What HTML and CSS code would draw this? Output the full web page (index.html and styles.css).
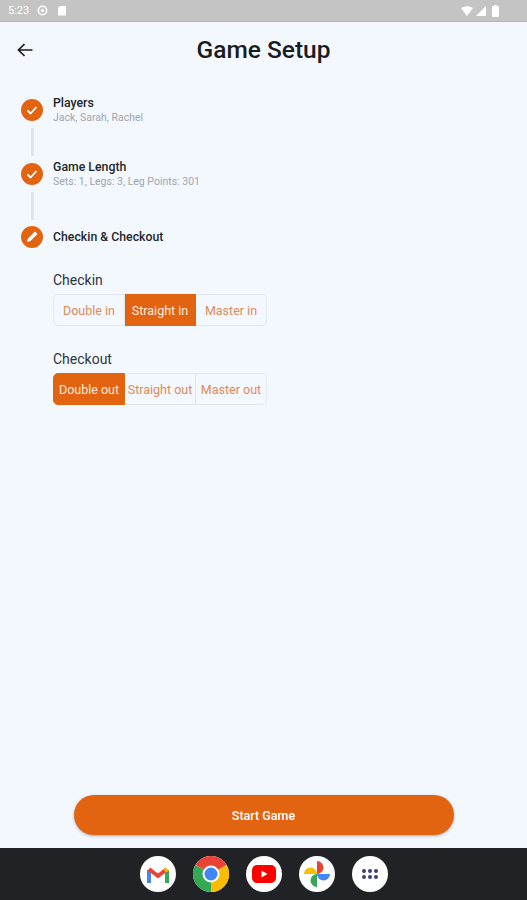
FILE: index.html
```html
<!DOCTYPE html>
<html lang="en">
  <head>
    <meta charset="UTF-8" />
    <meta name="viewport" content="width=device-width, initial-scale=1.0" />
    <title>Game Setup</title>
    <link rel="stylesheet" href="styles.css">
  </head>
  <body>
    <div class="status-bar">
      <div class="status-left">
        <span class="clock">5:23</span>
        <svg class="status-icon" width="11" height="11" viewBox="0 0 11 11"><circle cx="5.5" cy="5.5" r="4.2" fill="none" stroke="#fff" stroke-width="1.6"/><circle cx="5.5" cy="5.5" r="1.6" fill="#fff"/></svg>
        <svg class="status-icon sd" width="10" height="11" viewBox="0 0 10 11"><path d="M3 1h6v9.500H1V3z" fill="#fff"/></svg>
      </div>
      <div class="status-right">
        <svg width="12" height="10" viewBox="0 0 12 10"><path d="M0 2Q6 -1.500 12 2L6 10z" fill="#fff"/></svg>
        <svg width="10" height="10" viewBox="0 0 10 10"><path d="M10 0v10H0z" fill="#fff"/></svg>
        <svg class="battery" width="7" height="12" viewBox="0 0 7 12"><path d="M2 0h3v1h1a1 1 0 0 1 1 1v9a1 1 0 0 1-1 1H1a1 1 0 0 1-1-1V2a1 1 0 0 1 1-1h1z" fill="#fff"/></svg>
      </div>
    </div>

    <div class="page">
      <div class="header">
        <svg class="back" width="16" height="14" viewBox="0 0 16 14"><path d="M15.500 7H1.500M7.500 1L1.500 7l6 6" fill="none" stroke="#1a1c1e" stroke-width="1.700"/></svg>
        <div class="page-title">Game Setup</div>
      </div>

      <div class="stepper">
        <div class="step">
          <div class="step-side">
            <div class="step-dot">
              <svg width="14" height="14" viewBox="0 0 14 14"><path d="M2.500 7.500l3 3 6-6.500" fill="none" stroke="#fff" stroke-width="1.800"/></svg>
            </div>
            <div class="step-line"></div>
          </div>
          <div class="step-text">
            <div class="step-name">Players</div>
            <div class="step-sub">Jack, Sarah, Rachel</div>
          </div>
        </div>
        <div class="step">
          <div class="step-side">
            <div class="step-dot">
              <svg width="14" height="14" viewBox="0 0 14 14"><path d="M2.500 7.500l3 3 6-6.500" fill="none" stroke="#fff" stroke-width="1.800"/></svg>
            </div>
            <div class="step-line"></div>
          </div>
          <div class="step-text">
            <div class="step-name">Game Length</div>
            <div class="step-sub">Sets: 1, Legs: 3, Leg Points: 301</div>
          </div>
        </div>
        <div class="step step-current">
          <div class="step-side">
            <div class="step-dot">
              <svg width="16" height="16" viewBox="0 0 16 16"><path d="M3 13l1-3.500 7-7 2.500 2.500-7 7z" fill="#fff"/></svg>
            </div>
          </div>
          <div class="step-text">
            <div class="step-name">Checkin &amp; Checkout</div>
          </div>
        </div>
      </div>

      <div class="options">
        <div class="option-label">Checkin</div>
        <div class="segments">
          <div class="segment">Double in</div>
          <div class="segment selected">Straight in</div>
          <div class="segment">Master in</div>
        </div>
        <div class="option-label">Checkout</div>
        <div class="segments">
          <div class="segment selected">Double out</div>
          <div class="segment">Straight out</div>
          <div class="segment">Master out</div>
        </div>
      </div>

      <div class="footer">
        <div class="start-btn">Start Game</div>
      </div>
    </div>

    <div class="dock">
      <div class="app">
        <svg width="22" height="17" viewBox="0 0 22 17">
          <path d="M2 17V4" stroke="#4285f4" stroke-width="4" fill="none"/>
          <path d="M20 17V4" stroke="#34a853" stroke-width="4" fill="none"/>
          <path d="M2 3l9 7 9-7" stroke="#ea4335" stroke-width="4" fill="none"/>
          <path d="M18 5l2.500-2" stroke="#fbbc04" stroke-width="4" fill="none"/>
        </svg>
      </div>
      <div class="app app-chrome">
        <svg width="36" height="36" viewBox="0 0 36 36">
          <path d="M18 18L2.400 9A18 18 0 0 1 33.600 9z" fill="#ea4335"/>
          <path d="M18 18L33.600 9A18 18 0 0 1 18 36z" fill="#fbbc04"/>
          <path d="M18 18L18 36A18 18 0 0 1 2.400 9z" fill="#34a853"/>
          <circle cx="18" cy="18" r="8.500" fill="#fff"/>
          <circle cx="18" cy="18" r="6.500" fill="#4285f4"/>
        </svg>
      </div>
      <div class="app">
        <svg width="24" height="18" viewBox="0 0 24 18">
          <rect x="0" y="0" width="24" height="18" rx="5" fill="#f00"/>
          <path d="M9.500 5.500v7l6-3.500z" fill="#fff"/>
        </svg>
      </div>
      <div class="app">
        <svg width="26" height="26" viewBox="0 0 26 26">
          <path d="M13 13H0A6.500 6.500 0 0 1 13 13z" fill="#fbbc04"/>
          <path d="M13 13V0A6.500 6.500 0 0 1 13 13z" fill="#ea4335"/>
          <path d="M13 13H26A6.500 6.500 0 0 1 13 13z" fill="#4285f4"/>
          <path d="M13 13V26A6.500 6.500 0 0 1 13 13z" fill="#34a853"/>
        </svg>
      </div>
      <div class="app">
        <div class="app-grid">
          <span></span><span></span><span></span>
          <span></span><span></span><span></span>
        </div>
      </div>
    </div>
  </body>
</html>
```

FILE: styles.css
```css
* {
  margin: 0;
  padding: 0;
  box-sizing: border-box;
}
body {
  font-family: Roboto, "Liberation Sans", sans-serif;
  height: 900px;
  background-color: #f3f8ff;
  display: flex;
  flex-direction: column;
  overflow: hidden;
}
.status-bar {
  height: 22px;
  padding: 0 28px 0 8px;
  background-color: #c4c4c4;
  border-bottom: 1px solid #b4b6b8;
  display: flex;
  justify-content: space-between;
  align-items: center;
  color: #fff;
}
.status-left {
  display: flex;
  align-items: center;
}
.clock {
  font-size: 11px;
  margin-right: 8px;
}
.sd {
  margin-left: 9px;
}
.status-right {
  display: flex;
  align-items: center;
  gap: 3px;
}
.battery {
  margin-left: 3px;
}
.page {
  flex: 1;
  display: flex;
  flex-direction: column;
}
.header {
  height: 55px;
  padding-left: 17px;
  display: flex;
  align-items: center;
  position: relative;
}
.page-title {
  position: absolute;
  left: 0;
  right: 0;
  text-align: center;
  font-size: 24.500px;
  font-weight: 500;
  color: #1a1c1e;
}
.stepper {
  margin-top: 22px;
  padding-left: 21px;
}
.step {
  display: flex;
  height: 63.500px;
}
.step-current {
  height: 22px;
}
.step-side {
  width: 22px;
  margin-right: 10px;
  display: flex;
  flex-direction: column;
  align-items: center;
}
.step-dot {
  width: 22px;
  height: 22px;
  border-radius: 50%;
  background-color: #e36410;
  display: flex;
  align-items: center;
  justify-content: center;
  flex-shrink: 0;
}
.step-line {
  width: 3px;
  height: 28px;
  margin-top: 7px;
  background-color: #e0e3e9;
}
.step-text {
  height: 22px;
  display: flex;
  flex-direction: column;
  justify-content: center;
}
.step-name {
  font-size: 12.300px;
  font-weight: 500;
  line-height: 15px;
  color: #23262a;
}
.step-sub {
  font-size: 10.500px;
  line-height: 13px;
  color: #a1a5ab;
}
.options {
  padding: 0 0 0 53px;
  margin-top: 22px;
}
.option-label {
  font-size: 14px;
  line-height: 20px;
  color: #30343a;
  margin-bottom: 4px;
}
.segments {
  display: flex;
  width: 214px;
  height: 32px;
  margin-bottom: 23px;
}
.segment {
  width: 71px;
  display: flex;
  align-items: center;
  justify-content: center;
  font-size: 12.500px;
  white-space: nowrap;
  color: #e08a55;
  border: 1px solid #e2e5ec;
  border-left: none;
}
.segment:first-child {
  width: 72px;
  border-left: 1px solid #e2e5ec;
  border-radius: 5px 0 0 5px;
}
.segment:last-child {
  border-radius: 0 5px 5px 0;
}
.segment.selected {
  background-color: #e36410;
  color: #fbe9dc;
  border-color: #e36410;
}
.footer {
  margin-top: auto;
  padding-bottom: 13px;
  display: flex;
  justify-content: center;
}
.start-btn {
  width: 380px;
  height: 40px;
  border-radius: 20px;
  background-color: #e36410;
  box-shadow: 0 1px 3px rgba(0, 0, 0, 0.3);
  color: #fff;
  font-size: 12.500px;
  font-weight: 500;
  display: flex;
  align-items: center;
  justify-content: center;
}
.dock {
  height: 52px;
  padding-left: 1px;
  background-color: #202226;
  display: flex;
  justify-content: center;
  align-items: center;
  gap: 17px;
}
.app {
  width: 36px;
  height: 36px;
  border-radius: 50%;
  background-color: #fff;
  display: flex;
  align-items: center;
  justify-content: center;
}
.app-grid {
  display: grid;
  grid-template-columns: repeat(3, 4px);
  gap: 2px;
}
.app-grid span {
  width: 4px;
  height: 4px;
  border-radius: 50%;
  background-color: #3c3f78;
}
```
